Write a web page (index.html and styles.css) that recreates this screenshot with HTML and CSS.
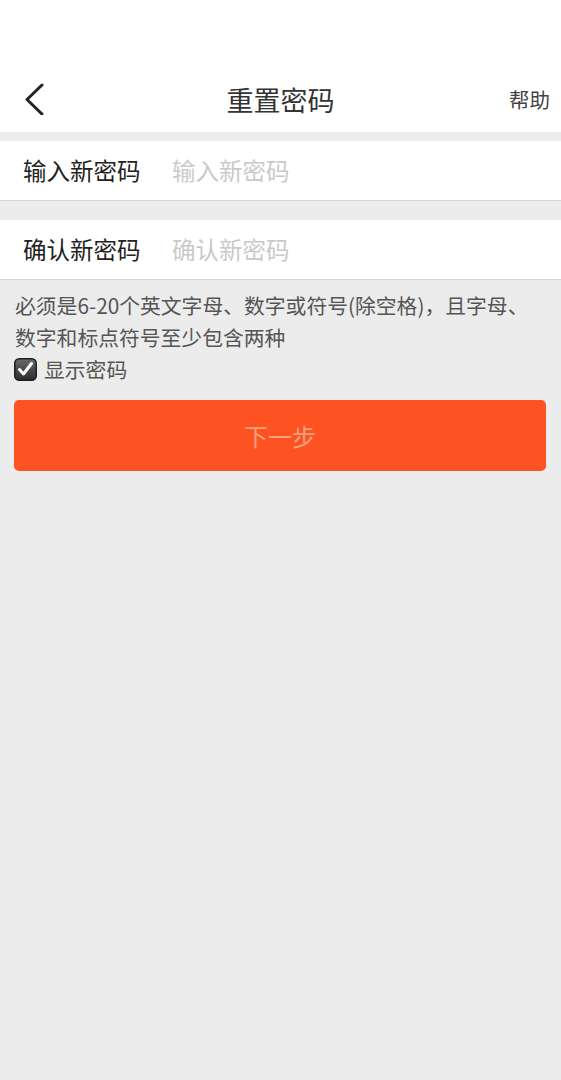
FILE: index.html
```html
<!DOCTYPE html>
<html lang="zh-CN">
<head>
<meta charset="utf-8">
<title>重置密码</title>
<link rel="stylesheet" href="styles.css">
</head>
<body>
<header class="header">
  <div class="status"></div>
  <nav class="nav">
    <div class="nav-left">
      <svg class="back" width="20" height="32" viewBox="0 0 20 32"><polyline points="17,2 2,16.5 17,31" fill="none" stroke="#222" stroke-width="3" stroke-linecap="round" stroke-linejoin="round"/></svg>
    </div>
    <h1 class="title">重置密码</h1>
    <div class="nav-right"><span class="help">帮助</span></div>
  </nav>
</header>
<main class="content">
  <div class="field first">
    <label class="label">输入新密码</label>
    <span class="placeholder">输入新密码</span>
  </div>
  <div class="field second">
    <label class="label">确认新密码</label>
    <span class="placeholder">确认新密码</span>
  </div>
  <p class="hint">必须是6-20个英文字母、数字或符号(除空格)，且字母、数字和标点符号至少包含两种</p>
  <div class="show">
    <svg class="check" width="23" height="23" viewBox="0 0 23 23">
      <defs>
        <linearGradient id="g" x1="0" y1="0" x2="0" y2="1">
          <stop offset="0" stop-color="#6a6a6a"/>
          <stop offset="1" stop-color="#2c2c2c"/>
        </linearGradient>
      </defs>
      <rect x="0.75" y="0.75" width="21.5" height="21.5" rx="4.5" fill="url(#g)" stroke="#1e1e1e" stroke-width="1.5"/>
      <polyline points="5.5,11.5 9.5,16 17.5,5.5" fill="none" stroke="#fff" stroke-width="3" stroke-linecap="round" stroke-linejoin="round"/>
    </svg>
    <span class="show-label">显示密码</span>
  </div>
  <button class="next" type="button">下一步</button>
</main>
</body>
</html>
```
FILE: styles.css
```css
html, body {
  margin: 0;
  padding: 0;
}
body {
  background: #ececec;
  font-family: "Noto Sans CJK SC", "Noto Sans", sans-serif;
  min-height: 1080px;
}
.header {
  background: #fff;
}
.status {
  height: 66px;
}
.nav {
  height: 66px;
  display: grid;
  grid-template-columns: 1fr auto 1fr;
  align-items: center;
}
.nav-left {
  padding-left: 25px;
  display: flex;
  align-items: center;
}
.back {
  display: block;
}
.title {
  margin: 0;
  font-size: 27px;
  font-weight: normal;
  color: #333;
  line-height: 1;
}
.nav-right {
  display: flex;
  justify-content: flex-end;
  padding-right: 11px;
}
.help {
  font-size: 20.5px;
  color: #444;
  line-height: 1;
}
.content {
  padding-top: 9px;
}
.field {
  background: #fff;
  height: 59px;
  border-bottom: 1px solid #d6d6d6;
  display: flex;
  align-items: center;
  padding-left: 23px;
}
.field.second {
  margin-top: 19px;
}
.label {
  width: 149px;
  font-size: 23.5px;
  color: #222;
  line-height: 1;
}
.placeholder {
  font-size: 23.5px;
  color: #c9c9c9;
  line-height: 1;
}
.hint {
  margin: 0;
  padding: 9px 14px 0 15px;
  font-size: 20.8px;
  line-height: 32px;
  color: #555;
}
.show {
  height: 32px;
  display: flex;
  align-items: center;
  padding-left: 14px;
  gap: 7px;
}
.check {
  display: block;
}
.show-label {
  font-size: 20.8px;
  color: #555;
  line-height: 1;
}
.next {
  display: block;
  margin: 15px 15px 0 14px;
  width: calc(100% - 29px);
  height: 71px;
  border: none;
  border-radius: 5px;
  background: #fd5323;
  color: #f6a27c;
  font-family: "Noto Sans CJK SC", "Noto Sans", sans-serif;
  font-size: 24px;
  padding: 0;
}
```
